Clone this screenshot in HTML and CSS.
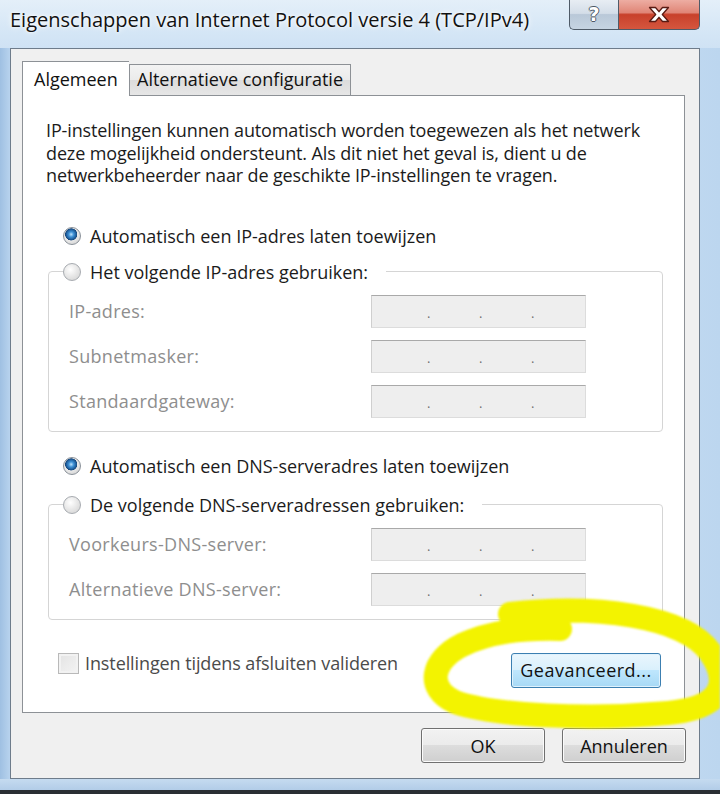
FILE: index.html
```html
<!DOCTYPE html>
<html lang="nl">
<head>
<meta charset="utf-8">
<title>Eigenschappen van Internet Protocol versie 4 (TCP/IPv4)</title>
<link rel="stylesheet" href="styles.css">
</head>
<body>
<div class="screen">
  <div class="titlebar">
    <div class="title">Eigenschappen van Internet Protocol versie 4 (TCP/IPv4)</div>
    <div class="caption-btns">
      <div class="cbtn help">?</div>
      <div class="cbtn close">
        <svg width="24" height="17" viewBox="0 0 24 17"><path d="M2.5 1.5h6l3.5 4.2 3.5-4.2h6l-6.2 7 6.2 7h-6l-3.5-4.2-3.5 4.2h-6l6.2-7z" fill="#fff" stroke="#5a1a12" stroke-width="1.3" stroke-linejoin="round"/></svg>
      </div>
    </div>
  </div>
  <div class="frame-body">
    <div class="client">
      <div class="tabs">
        <div class="tab active">Algemeen</div>
        <div class="tab">Alternatieve configuratie</div>
      </div>
      <div class="panel">
        <p class="intro">IP-instellingen kunnen automatisch worden toegewezen als het netwerk<br>deze mogelijkheid ondersteunt. Als dit niet het geval is, dient u de<br>netwerkbeheerder naar de geschikte IP-instellingen te vragen.</p>

        <div class="radio-row first"><span class="radio checked"></span><span>Automatisch een IP-adres laten toewijzen</span></div>
        <fieldset class="group g1">
          <legend class="radio-row"><span class="radio"></span><span>Het volgende IP-adres gebruiken:</span></legend>
          <div class="field"><span class="flabel">IP-adres:</span><span class="ipbox"><i>.</i><i>.</i><i>.</i></span></div>
          <div class="field"><span class="flabel">Subnetmasker:</span><span class="ipbox"><i>.</i><i>.</i><i>.</i></span></div>
          <div class="field"><span class="flabel">Standaardgateway:</span><span class="ipbox"><i>.</i><i>.</i><i>.</i></span></div>
        </fieldset>

        <div class="radio-row third"><span class="radio checked"></span><span>Automatisch een DNS-serveradres laten toewijzen</span></div>
        <fieldset class="group g2">
          <legend class="radio-row"><span class="radio"></span><span>De volgende DNS-serveradressen gebruiken:</span></legend>
          <div class="field"><span class="flabel">Voorkeurs-DNS-server:</span><span class="ipbox"><i>.</i><i>.</i><i>.</i></span></div>
          <div class="field"><span class="flabel">Alternatieve DNS-server:</span><span class="ipbox"><i>.</i><i>.</i><i>.</i></span></div>
        </fieldset>

        <div class="bottom-row">
          <div class="check-row"><span class="checkbox"></span><span>Instellingen tijdens afsluiten valideren</span></div>
          <button class="btn focused">Geavanceerd...</button>
        </div>
      </div>
      <div class="actions">
        <button class="btn ok">OK</button>
        <button class="btn">Annuleren</button>
      </div>
    </div>
  </div>
  <div class="frame-bottom"></div>
  <svg class="highlight" width="720" height="794" viewBox="0 0 720 794">
    <path d="M510 614 C595 604 685 616 710 652 C732 684 722 708 668 713 C590 720 495 716 455 702 C425 688 432 660 462 645 C490 632 520 628 560 629" fill="none" stroke="#f3f300" stroke-width="24" stroke-linecap="round" stroke-linejoin="round"/>
  </svg>
</div>
</body>
</html>
```

FILE: styles.css
```css
* { box-sizing: border-box; }
html, body { margin: 0; padding: 0; }
body {
  width: 720px;
  height: 794px;
  overflow: hidden;
  font-family: "Open Sans", "Noto Sans", sans-serif;
  font-size: 18px;
  color: #1b1b1b;
}
.screen {
  position: relative;
  width: 720px;
  height: 794px;
  background: linear-gradient(90deg, #9fc0e2 0, #b8d3ee 10px, #d3e5f5 40%, #cfe2f4 70%, #bcd6ef 100%);
  display: flex;
  flex-direction: column;
}
.titlebar {
  height: 48px;
  display: flex;
  align-items: flex-start;
  padding-left: 10px;
  background: linear-gradient(180deg, #e4eff9 0, #d6e7f6 60%, #cfe2f4 100%);
}
.title {
  margin-top: 6px;
  line-height: 28px;
  font-size: 20px;
  color: #111;
  text-shadow: 0 0 6px #fff, 0 0 3px #fff;
  white-space: nowrap;
}
.caption-btns {
  margin-left: auto;
  margin-right: 20px;
  display: flex;
  height: 31px;
  margin-top: -1px;
}
.cbtn {
  height: 31px;
  border: 1px solid #4f5b68;
  border-top: none;
  display: flex;
  align-items: center;
  justify-content: center;
}
.help {
  width: 49px;
  border-radius: 0 0 0 5px;
  border-right: none;
  background: linear-gradient(180deg, #e9eef4 0, #d3dde8 48%, #b9c8d8 52%, #c6d4e2 100%);
  font-family: "DejaVu Sans", sans-serif;
  font-weight: bold;
  font-size: 19px;
  color: #fff;
  text-shadow: -1px 0 #4d5866, 1px 0 #4d5866, 0 1px #4d5866, 0 -1px #4d5866;
}
.close {
  width: 82px;
  border-radius: 0 0 5px 0;
  background: linear-gradient(180deg, #eeb0a6 0, #e08677 45%, #c8412b 52%, #d5563e 100%);
}
.frame-body {
  flex: 1;
  display: flex;
  padding: 0 20px 0 10px;
}
.client {
  width: 690px;
  height: 731px;
  background: #f0f0f0;
  border: 1px solid #6e7c8b;
  display: flex;
  flex-direction: column;
  padding: 0 0 0 11px;
}
.frame-bottom {
  height: 15px;
  background: linear-gradient(180deg, #c5dbf0 0, #b3cde8 70%, #2a2e33 73%, #2a2e33 100%);
}
.tabs {
  display: flex;
  align-items: flex-end;
  margin-top: 12px;
  height: 35px;
  position: relative;
  z-index: 2;
}
.tab {
  height: 31px;
  line-height: 29px;
  border: 1px solid #8d9196;
  border-bottom: none;
  background: linear-gradient(180deg, #f3f3f3 0, #ebebeb 50%, #dcdcdc 51%, #e6e6e6 100%);
  font-size: 18px;
  color: #111;
  white-space: nowrap;
}
.tab.active {
  height: 35px;
  background: #fff;
  padding: 0 0 0 11px;
  line-height: 34px;
  width: 107px;
  border-right: none;
}
.tab:not(.active) { width: 222px; margin-bottom: 1px; padding: 0 0 0 7px; }
.panel {
  width: 663px;
  height: 618px;
  margin-top: -1px;
  background: #fff;
  border: 1px solid #8d9196;
  display: flex;
  flex-direction: column;
  position: relative;
  z-index: 1;
}
.intro {
  margin: 23px 0 0 23px;
  line-height: 22.5px;
  letter-spacing: -0.13px;
  white-space: nowrap;
}
.radio-row {
  display: flex;
  align-items: center;
  height: 22px;
  gap: 9px;
  white-space: nowrap;
}
.radio-row.first { margin: 38px 0 0 40px; }
.radio-row.third { margin: 23px 0 0 40px; }
.radio {
  flex: none;
  width: 18px;
  height: 18px;
  border-radius: 50%;
  border: 1px solid #a7abb0;
  background: radial-gradient(circle at 40% 35%, #ffffff 0, #e9e9e9 45%, #cfcfcf 100%);
}
.radio.checked {
  border-color: #8a9199;
  background:
    radial-gradient(circle at 45% 40%, #bfe2fb 0, #3f92d6 2.5px, #1d5a98 5px, #17477a 5.8px, rgba(0,0,0,0) 6.3px),
    radial-gradient(circle at 40% 35%, #ffffff 0, #e6e6e6 55%, #c9c9c9 100%);
}
.group {
  margin: 0 21px 0 25px;
  padding: 0 0 13px 0;
  border: 1px solid #d5d5d5;
  border-radius: 4px;
  min-width: 0;
}
.group.g1 { margin-top: 14px; }
.group.g2 { margin-top: 17px; }
.group legend {
  padding: 0 18px 0 0;
  margin-left: 14px;
  width: auto;
}
.field {
  display: flex;
  align-items: center;
  height: 33px;
  margin-top: 12px;
  padding-left: 20px;
}
.flabel {
  width: 302px;
  color: #8e8e8e;
  letter-spacing: 0.3px;
}
.ipbox {
  width: 215px;
  height: 33px;
  background: #eeeeee;
  border: 1px solid #dcdcdc;
  border-top-color: #a9a9a9;
  border-left-color: #cfcfcf;
  display: flex;
  padding-left: 55px;
  gap: 44px;
  align-items: flex-end;
  padding-bottom: 9px;
}
.ipbox i {
  font-style: normal;
  font-size: 13px;
  line-height: 10px;
  color: #6e6e6e;
  width: 8px;
}
.bottom-row {
  display: flex;
  align-items: flex-start;
  margin: 33px 23px 0 35px;
}
.check-row {
  display: flex;
  align-items: center;
  height: 21px;
  gap: 6px;
  color: #4b4b4b;
  letter-spacing: -0.1px;
  white-space: nowrap;
}
.checkbox {
  width: 21px;
  height: 21px;
  border: 1px solid #b9b9b9;
  background: linear-gradient(135deg, #e3e3e3 0, #f4f4f4 100%);
  box-shadow: inset 0 0 0 2px #f2f2f2;
}
.btn {
  font-family: "Open Sans", "Noto Sans", sans-serif;
  font-size: 18px;
  color: #111;
  height: 35px;
  border: 1px solid #707070;
  border-radius: 3px;
  background: linear-gradient(180deg, #f2f2f2 0, #ebebeb 49%, #dddddd 50%, #cfcfcf 100%);
  box-shadow: inset 0 0 0 1px #fbfbfb;
  padding: 0;
}
.btn.focused {
  margin-left: auto;
  width: 150px;
  letter-spacing: 0.5px;
  border-color: #3c7fb1;
  background: linear-gradient(180deg, #eaf6fd 0, #d9f0fc 49%, #bee6fd 50%, #a7d9f5 100%);
  box-shadow: inset 0 0 0 1px #dff2fd;
}
.actions {
  display: flex;
  justify-content: flex-end;
  gap: 17px;
  margin-top: 15px;
  padding-right: 13px;
}
.actions .btn { width: 124px; height: 35px; }
.highlight {
  position: absolute;
  left: 0;
  top: 0;
  z-index: 10;
  pointer-events: none;
  filter: blur(0.8px);
}
```
